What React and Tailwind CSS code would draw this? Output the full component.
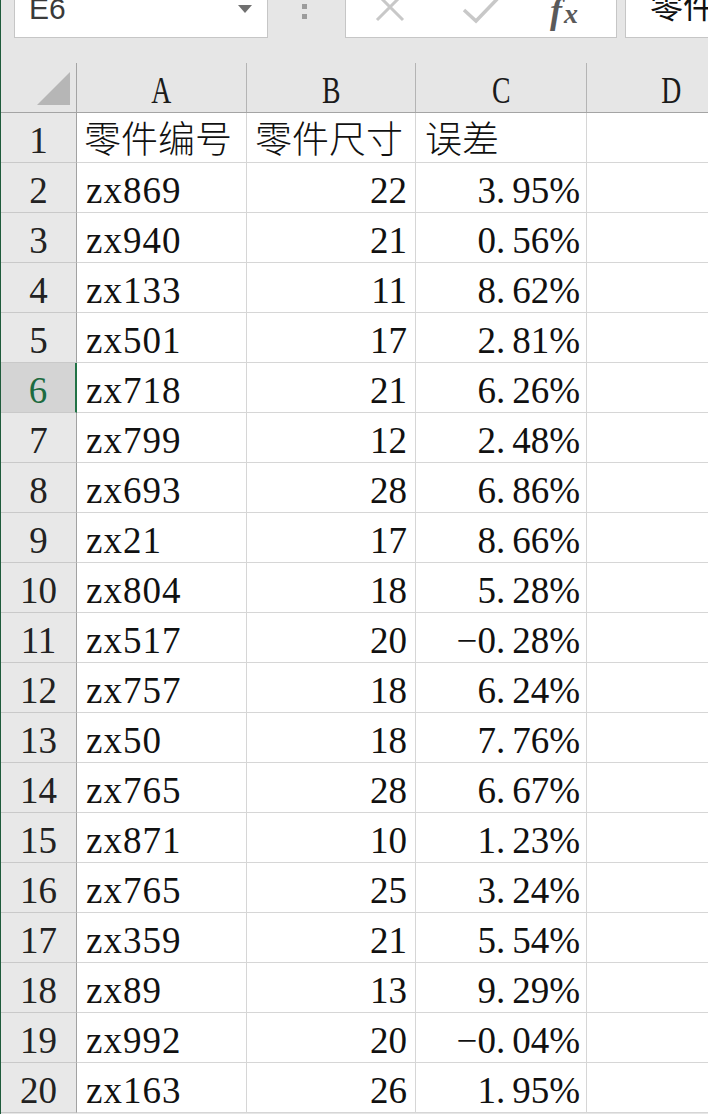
import React from "react";

const data = [
  ["zx869", 22, "3.95%"],
  ["zx940", 21, "0.56%"],
  ["zx133", 11, "8.62%"],
  ["zx501", 17, "2.81%"],
  ["zx718", 21, "6.26%"],
  ["zx799", 12, "2.48%"],
  ["zx693", 28, "6.86%"],
  ["zx21", 17, "8.66%"],
  ["zx804", 18, "5.28%"],
  ["zx517", 20, "-0.28%"],
  ["zx757", 18, "6.24%"],
  ["zx50", 18, "7.76%"],
  ["zx765", 28, "6.67%"],
  ["zx871", 10, "1.23%"],
  ["zx765", 25, "3.24%"],
  ["zx359", 21, "5.54%"],
  ["zx89", 13, "9.29%"],
  ["zx992", 20, "-0.04%"],
  ["zx163", 26, "1.95%"],
];

const serif = "font-['Liberation_Serif','Noto_Sans_CJK_SC',serif]";

function Pct({ v }) {
  const neg = v.startsWith("-");
  const s = neg ? v.slice(1) : v;
  const [a, b] = s.split(".");
  return (
    <>
      {neg ? "\u2212" : ""}
      {a}
      <span className="mr-[7px]">.</span>
      {b.replace("%", "")}
      <span className="tracking-[-2px]">%</span>
    </>
  );
}

function Cell({ className = "", children }) {
  return (
    <div
      className={`h-[50px] shrink-0 border-b border-r border-[#d6d6d6] bg-white pt-[6px] leading-[43px] text-[37px] text-[#111] whitespace-nowrap overflow-hidden ${className}`}
    >
      {children}
    </div>
  );
}

function RowHead({ n, selected }) {
  return (
    <div
      className={`h-[50px] w-[76px] shrink-0 border-b border-[#c9c9c9] pt-[6px] leading-[43px] text-[37px] text-center ${
        selected
          ? "bg-[#d4d4d4] text-[#1d6b40] border-r-[2px] border-r-[#217346]"
          : "bg-[#e8e8e8] text-[#222] border-r border-r-[#a2a2a2]"
      }`}
    >
      {n}
    </div>
  );
}

export default function App() {
  return (
    <div
      className={`w-[708px] h-[1114px] overflow-hidden bg-[#e6e6e6] border-l border-[#1f5b3b] flex flex-col ${serif}`}
    >
      {/* Formula bar */}
      <div className="h-[63px] shrink-0 flex items-start">
        <div className="ml-[13px] w-[254px] h-[38px] bg-white border-x border-b border-[#c6c6c6] flex items-start justify-between overflow-hidden pl-[14px] pr-[15px]">
          <span className="font-['Liberation_Sans',sans-serif] text-[30px] leading-[30px] mt-[-6px] text-[#3a3a3a]">
            E6
          </span>
          <svg className="mt-[5px]" width="14" height="9" viewBox="0 0 14 9">
            <path d="M0 0 H14 L7 8 Z" fill="#707070" />
          </svg>
        </div>
        <div className="ml-[34px] w-[5px] flex flex-col gap-[5px] mt-[4px]">
          <div className="w-[5px] h-[5px] bg-[#9c9c9c]" />
          <div className="w-[5px] h-[5px] bg-[#9c9c9c]" />
        </div>
        <div className="ml-[38px] w-[272px] h-[38px] bg-white border-x border-b border-[#c6c6c6] flex items-start overflow-hidden">
          <svg className="ml-[28px] mt-[-6px]" width="32" height="28" viewBox="0 0 32 28">
            <path d="M3 0 L29 26 M29 0 L3 26" stroke="#c8c8c8" strokeWidth="3" fill="none" />
          </svg>
          <svg className="ml-[56px] mt-[-4px]" width="42" height="28" viewBox="0 0 42 28">
            <path d="M2 14 L14 25 L40 -2" stroke="#c8c8c8" strokeWidth="3.5" fill="none" />
          </svg>
          <div className="ml-[46px] mt-[-4px] italic font-bold text-[#5a5a5a] leading-[30px] font-['Liberation_Serif',serif] whitespace-nowrap">
            <span className="text-[36px]">f</span>
            <span className="text-[28px] ml-[2px]">x</span>
          </div>
        </div>
        <div className="ml-[8px] flex-1 h-[38px] bg-white border-l border-b border-[#c6c6c6] overflow-hidden pl-[24px]">
          <span className="font-['Noto_Sans_CJK_SC',sans-serif] text-[33px] leading-[33px] mt-[-12px] block text-[#111] whitespace-nowrap">
            零件尺寸
          </span>
        </div>
      </div>

      {/* Column headers */}
      <div className="h-[50px] shrink-0 flex border-b border-[#a4a4a4]">
        <div className="w-[76px] shrink-0 border-r border-[#a4a4a4] flex items-end justify-end pr-[6px] pb-[7px]">
          <svg width="33" height="33" viewBox="0 0 33 33">
            <path d="M33 0 V33 H0 Z" fill="#b6b6b6" />
          </svg>
        </div>
        {[
          ["A", "w-[170px]"],
          ["B", "w-[169px]"],
          ["C", "w-[171px]"],
          ["D", "w-[170px]"],
        ].map(([l, w]) => (
          <div
            key={l}
            className={`${w} shrink-0 border-r border-[#b4b4b4] text-center pt-[6px] leading-[43px] text-[37px] text-[#1a1a1a]`}
          >
            <span className="inline-block scale-x-75">{l}</span>
          </div>
        ))}
      </div>

      {/* Row 1 */}
      <div className="flex">
        <RowHead n={1} />
        <Cell className="w-[170px] pl-[7px] font-light">零件编号</Cell>
        <Cell className="w-[169px] pl-[8px] font-light">零件尺寸</Cell>
        <Cell className="w-[171px] pl-[9px] font-light">误差</Cell>
        <Cell className="w-[170px]" />
      </div>

      {data.map(([a, b, c], i) => (
        <div className="flex" key={i}>
          <RowHead n={i + 2} selected={i + 2 === 6} />
          <Cell className="w-[170px] pl-[9px] tracking-[1px]">{a}</Cell>
          <Cell className="w-[169px] pr-[8px] text-right">{b}</Cell>
          <Cell className="w-[171px] pr-[8px] text-right">
            <Pct v={c} />
          </Cell>
          <Cell className="w-[170px]" />
        </div>
      ))}
    </div>
  );
}
